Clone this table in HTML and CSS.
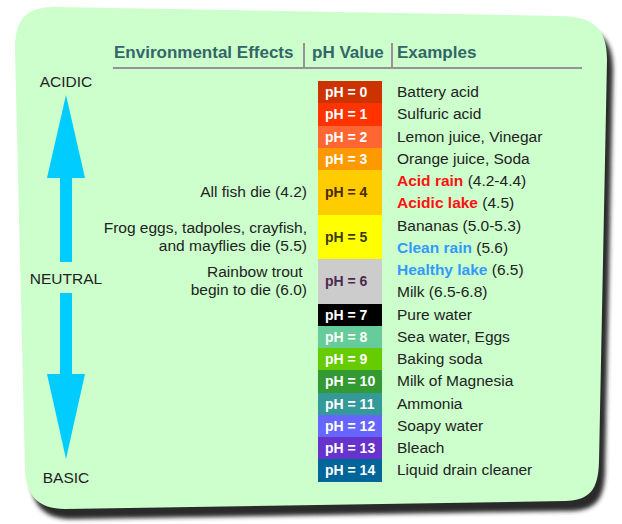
FILE: index.html
```html
<!DOCTYPE html>
<html lang="en">
<head>
<meta charset="utf-8">
<title>pH Scale</title>
<link rel="stylesheet" href="styles.css">
</head>
<body>
<div class="stage">
  <svg class="bg" viewBox="0 0 622 524" width="622" height="524" aria-hidden="true">
    <defs>
      <filter id="sh" x="-5%" y="-5%" width="110%" height="110%">
        <feGaussianBlur stdDeviation="2.2"/>
      </filter>
    </defs>
    <path class="shadow" transform="translate(6 10)" filter="url(#sh)" d="M15 50 C15 20 25 7 55 7 L560 16 C595 16 607 30 607 60 L599 462 C598 490 590 500 565 501 L65 509 C38 509 26 495 25 470 Z"/>
    <path class="card" d="M15 50 C15 20 25 7 55 7 L560 16 C595 16 607 30 607 60 L599 462 C598 490 590 500 565 501 L65 509 C38 509 26 495 25 470 Z"/>
  </svg>
  <div class="content">
    <div class="scale">
      <div class="lbl">ACIDIC</div>
      <svg class="arrow up" width="38" height="167" viewBox="0 0 38 167"><polygon points="19,0 38,83 25,83 25,167 13,167 13,83 0,83"/></svg>
      <div class="lbl neutral">NEUTRAL</div>
      <svg class="arrow down" width="38" height="166" viewBox="0 0 38 166"><polygon points="13,0 25,0 25,81 38,81 19,166 0,81 13,81"/></svg>
      <div class="lbl basic">BASIC</div>
    </div>
    <div class="chart">
      <div class="head">
        <div class="h1">Environmental Effects</div>
        <div class="h2">pH Value</div>
        <div class="h3">Examples</div>
      </div>
      <div class="rows">
        <div class="grp"><div class="eff"></div><div class="ph p0">pH = 0</div><div class="ex"><div>Battery acid</div></div></div>
        <div class="grp"><div class="eff"></div><div class="ph p1">pH = 1</div><div class="ex"><div>Sulfuric acid</div></div></div>
        <div class="grp"><div class="eff"></div><div class="ph p2">pH = 2</div><div class="ex"><div>Lemon juice, Vinegar</div></div></div>
        <div class="grp"><div class="eff"></div><div class="ph p3">pH = 3</div><div class="ex"><div>Orange juice, Soda</div></div></div>
        <div class="grp"><div class="eff">All fish die (4.2)</div><div class="ph p4">pH = 4</div><div class="ex"><div><b class="red">Acid rain</b> (4.2-4.4)</div><div><b class="red">Acidic lake</b> (4.5)</div></div></div>
        <div class="grp"><div class="eff">Frog eggs, tadpoles, crayfish,<br>and mayflies die (5.5)</div><div class="ph p5">pH = 5</div><div class="ex"><div>Bananas (5.0-5.3)</div><div><b class="blue">Clean rain</b> (5.6)</div></div></div>
        <div class="grp"><div class="eff">Rainbow trout&nbsp;<br>begin to die (6.0)</div><div class="ph p6">pH = 6</div><div class="ex"><div><b class="blue">Healthy lake</b> (6.5)</div><div>Milk (6.5-6.8)</div></div></div>
        <div class="grp"><div class="eff"></div><div class="ph p7">pH = 7</div><div class="ex"><div>Pure water</div></div></div>
        <div class="grp"><div class="eff"></div><div class="ph p8">pH = 8</div><div class="ex"><div>Sea water, Eggs</div></div></div>
        <div class="grp"><div class="eff"></div><div class="ph p9">pH = 9</div><div class="ex"><div>Baking soda</div></div></div>
        <div class="grp"><div class="eff"></div><div class="ph p10">pH = 10</div><div class="ex"><div>Milk of Magnesia</div></div></div>
        <div class="grp"><div class="eff"></div><div class="ph p11">pH = 11</div><div class="ex"><div>Ammonia</div></div></div>
        <div class="grp"><div class="eff"></div><div class="ph p12">pH = 12</div><div class="ex"><div>Soapy water</div></div></div>
        <div class="grp"><div class="eff"></div><div class="ph p13">pH = 13</div><div class="ex"><div>Bleach</div></div></div>
        <div class="grp"><div class="eff"></div><div class="ph p14">pH = 14</div><div class="ex"><div>Liquid drain cleaner</div></div></div>
      </div>
    </div>
  </div>
</div>
</body>
</html>
```

FILE: styles.css
```css
* { box-sizing: border-box; }

body {
  margin: 0;
  background: #ffffff;
  font-family: "Liberation Sans", Arial, sans-serif;
  font-size: 15.5px;
  color: #222222;
}

.stage {
  display: grid;
  width: 622px;
  height: 524px;
}

.bg,
.content {
  grid-area: 1 / 1;
}

.bg .card { fill: #ccffcc; }
.bg .shadow { fill: #2a2a2a; }

.content {
  display: flex;
  align-items: flex-start;
  padding: 43px 0 0 19px;
}

/* left scale */
.scale {
  width: 94px;
  margin-top: 30px;
  display: flex;
  flex-direction: column;
  align-items: center;
}

.lbl {
  line-height: 18px;
  height: 18px;
  color: #222222;
  white-space: nowrap;
}

.arrow { display: block; fill: #00ccff; }
.arrow.up { margin-top: 4px; }
.neutral { margin-top: 8px; }
.arrow.down { margin-top: 5px; }
.basic { margin-top: 10px; }

/* chart */
.chart { width: 469px; }

.head {
  display: grid;
  grid-template-columns: 192px 88px 189px;
  height: 26px;
  border-bottom: 2px solid #9a909a;
  font-size: 17px;
  font-weight: bold;
  line-height: 20px;
  color: #336666;
}

.head > div { white-space: nowrap; }
.head .h1 { padding-left: 1px; border-right: 2px solid #9a909a; }
.head .h2 { padding-left: 7px; border-right: 2px solid #9a909a; }
.head .h3 { padding-left: 4px; }

.rows { margin-top: 12px; }

.grp {
  display: grid;
  grid-template-columns: 205px 64px 1fr;
}

.eff {
  margin-left: -20px;
  padding-right: 11px;
  text-align: right;
  line-height: 18px;
  align-self: center;
  white-space: nowrap;
}

.ph {
  display: flex;
  align-items: center;
  padding-left: 7px;
  font-size: 14px;
  font-weight: bold;
  color: #ffffff;
  white-space: nowrap;
}

.ex {
  padding-left: 15px;
  line-height: 22.25px;
  white-space: nowrap;
}

.red { color: #ff1111; }
.blue { color: #3399ff; }

.p0 { background: #cc3300; }
.p1 { background: #ff3300; }
.p2 { background: #ff6633; }
.p3 { background: #ff9900; }
.p4 { background: #ffcc00; color: #4a2a00; }
.p5 { background: #ffff00; color: #3a3a10; }
.p6 { background: #cccccc; color: #4d2a4d; }
.p7 { background: #000000; }
.p8 { background: #66cc99; }
.p9 { background: #66cc00; }
.p10 { background: #339933; }
.p11 { background: #339999; }
.p12 { background: #6666ff; }
.p13 { background: #6633cc; }
.p14 { background: #006699; }
```
